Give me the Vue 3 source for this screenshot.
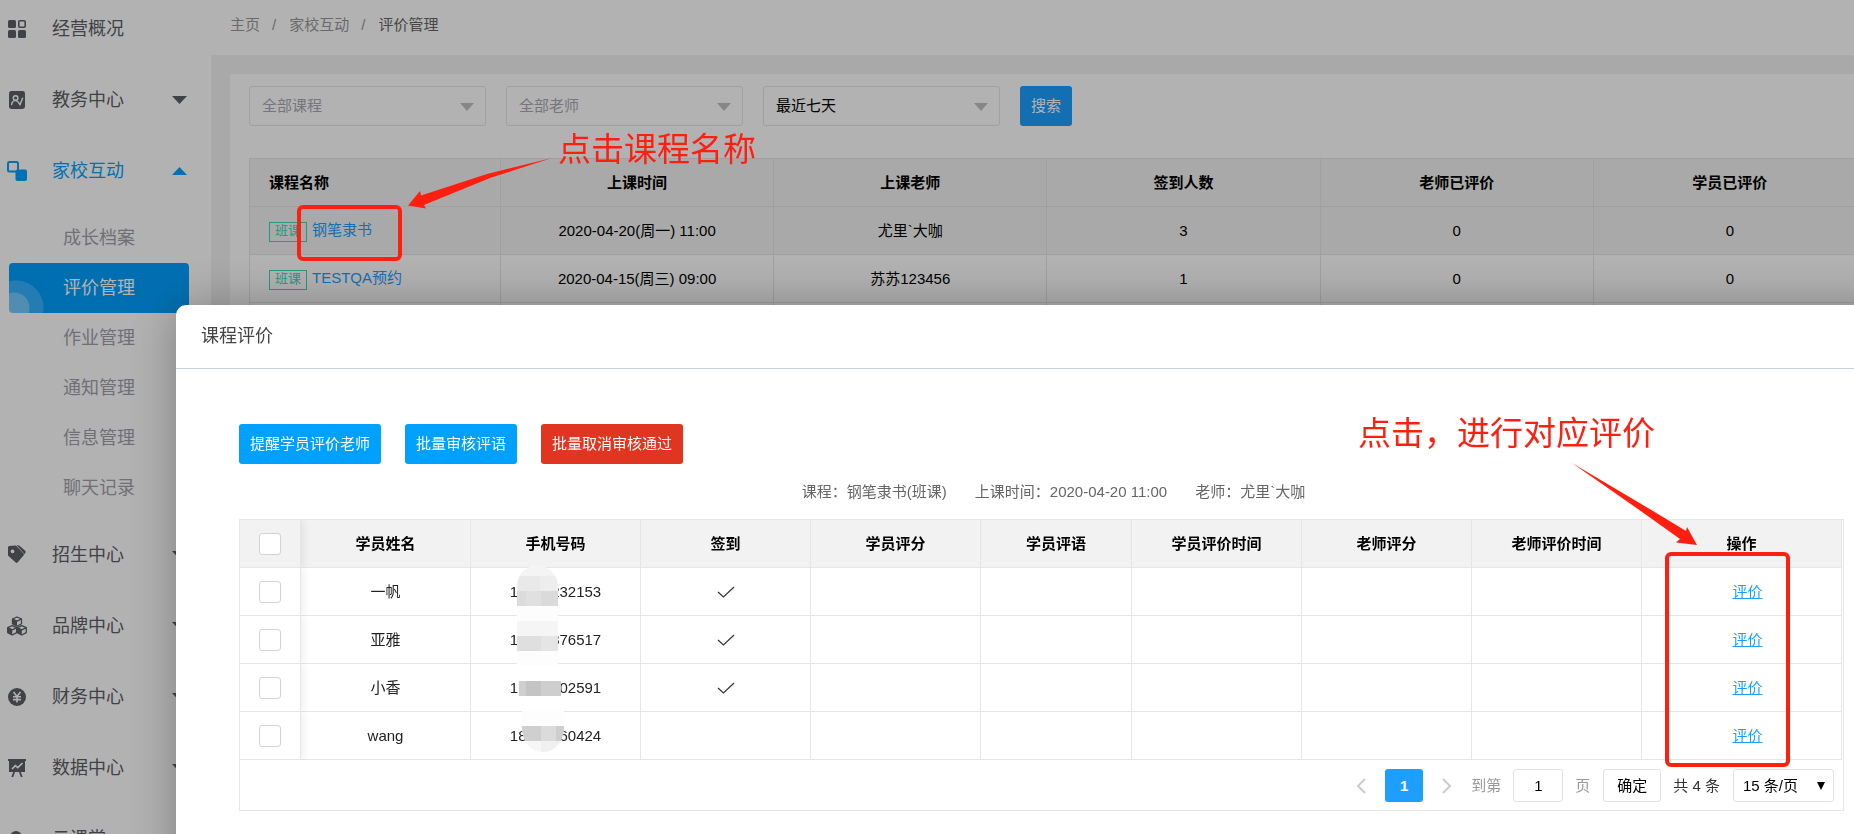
<script setup>
import { ref } from 'vue'

const topMenu = [
  { label: '经营概况', icon: 'grid', arrow: false },
  { label: '教务中心', icon: 'book', arrow: true },
]
const subMenu = ['成长档案', '评价管理', '作业管理', '通知管理', '信息管理', '聊天记录']
const activeSub = ref('评价管理')
const bottomMenu = [
  { label: '招生中心', icon: 'tag' },
  { label: '品牌中心', icon: 'cubes' },
  { label: '财务中心', icon: 'yen' },
  { label: '数据中心', icon: 'board' },
  { label: '云课堂', icon: 'cloud' },
]

const lessonHeads = ['课程名称', '上课时间', '上课老师', '签到人数', '老师已评价', '学员已评价']
const lessons = [
  { name: '钢笔隶书', time: '2020-04-20(周一) 11:00', teacher: '尤里`大咖', count: 3, a: 0, b: 0, hover: true },
  { name: 'TESTQA预约', time: '2020-04-15(周三) 09:00', teacher: '苏苏123456', count: 1, a: 0, b: 0, hover: false },
  { name: '', time: '', teacher: '', count: '', a: '', b: '', hover: false },
]

const studentHeads = ['学员姓名', '手机号码', '签到', '学员评分', '学员评语', '学员评价时间', '老师评分', '老师评价时间', '操作']
const students = [
  { name: '一帆', head: '1', tail: '232153', signed: true },
  { name: '亚雅', head: '1', tail: '376517', signed: true },
  { name: '小香', head: '18', tail: '02591', signed: true },
  { name: 'wang', head: '18', tail: '60424', signed: false },
]
const pageNo = ref('1')
</script>

<template>
  <div class="page">
    <aside class="sidebar">
      <nav>
        <a v-for="m in topMenu" :key="m.label" href="#" class="item">
          <svg v-if="m.icon === 'grid'" class="icon" viewBox="0 0 20 20">
            <rect x="1" y="1" width="8" height="8" rx="1.6" />
            <rect x="11.8" y="1.8" width="6.4" height="6.4" rx="1" fill="none" stroke="currentColor" stroke-width="1.6" />
            <rect x="1" y="11" width="8" height="8" rx="1.6" />
            <rect x="11" y="11" width="8" height="8" rx="1.6" />
          </svg>
          <svg v-else class="icon" viewBox="0 0 20 20">
            <rect x="2" y="1" width="16" height="18" rx="2.4" />
            <g fill="none" stroke="#fff" stroke-width="1.4" stroke-linecap="round">
              <circle cx="8.6" cy="8" r="2.3" />
              <path d="M4.6 14.6c.4-2.500 1.800-4 3.800-4.200 1.800.2 2.800 1.200 4.600 4.200l2.600-6.400" />
            </g>
          </svg>
          <span>{{ m.label }}</span>
          <svg v-if="m.arrow" class="caret" viewBox="0 0 15 8"><path d="M0 0h15L7.500 8z" /></svg>
        </a>
        <a href="#" class="item open">
          <svg class="icon" viewBox="0 0 20 20">
            <rect x="1" y="1" width="10" height="9.500" rx="1.500" fill="none" stroke="currentColor" stroke-width="2" />
            <rect x="8.500" y="8.500" width="11.500" height="11.500" rx="2" />
          </svg>
          <span>家校互动</span>
          <svg class="caret" viewBox="0 0 15 8"><path d="M0 8h15L7.500 0z" /></svg>
        </a>
        <div class="submenu">
          <a
            v-for="s in subMenu"
            :key="s"
            href="#"
            class="sub"
            :class="{ active: s === activeSub }"
            @click.prevent="activeSub = s"
          >{{ s }}</a>
        </div>
        <a v-for="m in bottomMenu" :key="m.label" href="#" class="item">
          <svg v-if="m.icon === 'tag'" class="icon" viewBox="0 0 20 20">
            <path fill-rule="evenodd" d="M1 2l1-1 7-.6 7.500 8.100c.6.7.6 1.300 0 1.900l-6 7.100c-.6.6-1.200.6-1.800 0L1 10.500zM5.500 4.400a1.900 1.900 0 1 0 0 3.800 1.900 1.900 0 0 0 0-3.800z" />
            <path d="M9.500 0l3 .8 5.700 4.900c.6.5.7 1.200.3 1.900l-.9 1.700z" />
          </svg>
          <svg v-else-if="m.icon === 'cubes'" class="icon" viewBox="0 0 20 20">
            <g fill="none" stroke="currentColor" stroke-width="1.300" stroke-linejoin="round">
              <path d="M10 1l4.500 2v4.800L10 10.200 5.500 7.800V3z" />
              <path d="M5.200 9.700l4.500 2v4.900L5.200 19 .7 16.600v-4.900z" />
              <path d="M14.800 9.700l4.500 2v4.900L14.800 19l-4.500-2.400v-4.900z" />
              <path d="M5.500 3l4.500 2.200L14.500 3M.7 11.700l4.500 2.200 4.500-2.200M10.300 11.700l4.500 2.200 4.500-2.200" />
            </g>
            <path d="M5.500 3l4.500 2.200v5L5.500 7.800zM.7 11.700l4.500 2.200V19L.7 16.600zM10.300 11.700l4.500 2.200V19l-4.500-2.400z" />
          </svg>
          <svg v-else-if="m.icon === 'yen'" class="icon" viewBox="0 0 20 20">
            <circle cx="10" cy="10" r="9" />
            <path d="M6.500 5l3.500 4.500L13.500 5M6 9.800h8M6 12.600h8M10 9.500V15.500" fill="none" stroke="#fff" stroke-width="1.600" />
          </svg>
          <svg v-else-if="m.icon === 'board'" class="icon" viewBox="0 0 20 20">
            <path d="M1 1h18v2H1zM2 3h16v11H2z" />
            <path d="M7.200 14l-2 5M12.800 14l2 5" stroke="currentColor" stroke-width="1.800" />
            <path d="M5 11l3.400-3.400 2.400 2L15.500 5" fill="none" stroke="#fff" stroke-width="1.600" />
          </svg>
          <svg v-else class="icon" viewBox="0 0 20 20">
            <circle cx="9" cy="8" r="6" />
            <rect x="2" y="9" width="16" height="9" rx="4" />
          </svg>
          <span>{{ m.label }}</span>
          <svg class="caret" viewBox="0 0 15 8"><path d="M0 0h15L7.500 8z" /></svg>
        </a>
      </nav>
    </aside>

    <main class="main">
      <header class="crumbs">
        <a href="#">主页</a><i>/</i><a href="#">家校互动</a><i>/</i><span>评价管理</span>
      </header>
      <section class="panel">
        <form class="filters" @submit.prevent>
          <div class="pick">
            <select aria-label="课程" class="muted"><option>全部课程</option></select>
            <svg viewBox="0 0 14 8"><path d="M0 0h14L7 8z" /></svg>
          </div>
          <div class="pick">
            <select aria-label="老师" class="muted"><option>全部老师</option></select>
            <svg viewBox="0 0 14 8"><path d="M0 0h14L7 8z" /></svg>
          </div>
          <div class="pick">
            <select aria-label="时间"><option>最近七天</option></select>
            <svg viewBox="0 0 14 8"><path d="M0 0h14L7 8z" /></svg>
          </div>
          <button class="btn search">搜索</button>
        </form>
        <table class="lessons">
          <thead>
            <tr><th v-for="h in lessonHeads" :key="h">{{ h }}</th></tr>
          </thead>
          <tbody>
            <tr v-for="l in lessons" :key="l.name" :class="{ hover: l.hover }">
              <td>
                <template v-if="l.name">
                  <span class="badge">班课</span><a href="#">{{ l.name }}</a>
                </template>
              </td>
              <td>{{ l.time }}</td>
              <td>{{ l.teacher }}</td>
              <td>{{ l.count }}</td>
              <td>{{ l.a }}</td>
              <td>{{ l.b }}</td>
            </tr>
          </tbody>
        </table>
      </section>
    </main>
  </div>

  <div class="shade"></div>

  <section class="dialog" role="dialog" aria-labelledby="dialog-title">
    <h2 id="dialog-title">课程评价</h2>
    <div class="body">
      <div class="actions">
        <button class="btn">提醒学员评价老师</button>
        <button class="btn">批量审核评语</button>
        <button class="btn danger">批量取消审核通过</button>
      </div>
      <p class="info">
        <span>课程：钢笔隶书(班课)</span>
        <span>上课时间：2020-04-20 11:00</span>
        <span>老师：尤里`大咖</span>
      </p>
      <div class="grid">
        <table class="students">
          <thead>
            <tr>
              <th class="check"><input type="checkbox" aria-label="全选" /></th>
              <th v-for="(h, i) in studentHeads" :key="h" :class="{ narrow: i === 4, ops: i === 8 }">{{ h }}</th>
            </tr>
          </thead>
          <tbody>
            <tr v-for="s in students" :key="s.name">
              <td class="check"><input type="checkbox" :aria-label="s.name" /></td>
              <td>{{ s.name }}</td>
              <td class="phone">{{ s.head }}<span class="hidden"></span>{{ s.tail }}</td>
              <td>
                <svg v-if="s.signed" class="tick" viewBox="0 0 18 12"><path d="M1 6l5.500 5L17 1" /></svg>
              </td>
              <td></td><td></td><td></td><td></td><td></td>
              <td class="ops"><a href="#">评价</a></td>
            </tr>
          </tbody>
        </table>
        <div class="pager">
          <button class="step" aria-label="上一页"><svg viewBox="0 0 10 16"><path d="M9 1L2 8l7 7" /></svg></button>
          <button class="current">1</button>
          <button class="step" aria-label="下一页"><svg viewBox="0 0 10 16"><path d="M1 1l7 7-7 7" /></svg></button>
          <label for="page-no" class="grey to">到第</label>
          <input id="page-no" v-model="pageNo" type="text" />
          <span class="grey">页</span>
          <button class="ok">确定</button>
          <span class="total">共 4 条</span>
          <div class="size">
            <select aria-label="每页条数"><option>15 条/页</option></select>
            <svg viewBox="0 0 8 8"><path d="M0 0h8L4 8z" /></svg>
          </div>
        </div>
      </div>
    </div>
  </section>

  <!-- pixelated strip over the phone numbers -->
  <svg class="mosaic" width="50" height="188" viewBox="0 0 50 188" aria-hidden="true">
    <clipPath id="strip">
      <path d="M1 20C2 6 11 0 21 0s20 6 21 20v90h3v30h3v22c-1 16-10 24-21 24S7 178 6 162V130H3V105H1z" />
    </clipPath>
    <g clip-path="url(#strip)" shape-rendering="crispEdges">
      <rect width="50" height="188" fill="#fff" />
      <rect width="50" height="10" fill="#f4f4f4" />
      <rect y="10" width="24" height="15" fill="#e9e9e9" /><rect x="24" y="10" width="26" height="15" fill="#ededed" />
      <rect y="25" width="10" height="15" fill="#dcdcdc" /><rect x="10" y="25" width="15" height="15" fill="#e0e0e0" /><rect x="25" y="25" width="25" height="15" fill="#dadada" />
      <rect y="40" width="50" height="15" fill="#fdfdfd" />
      <rect y="55" width="50" height="15" fill="#f5f5f5" />
      <rect y="70" width="25" height="15" fill="#dfdfdf" /><rect x="25" y="70" width="25" height="15" fill="#e5e5e5" />
      <rect y="85" width="50" height="15" fill="#fdfdfd" />
      <rect y="115" width="10" height="15" fill="#cfcfcf" /><rect x="10" y="115" width="15" height="15" fill="#c4c4c4" /><rect x="25" y="115" width="25" height="15" fill="#cecece" />
      <rect y="145" width="50" height="15" fill="#fdfdfd" />
      <rect y="160" width="25" height="15" fill="#cfcfcf" /><rect x="25" y="160" width="15" height="15" fill="#dbdbdb" /><rect x="40" y="160" width="10" height="15" fill="#cdcdcd" />
      <rect y="175" width="25" height="13" fill="#f6f6f6" /><rect x="25" y="175" width="25" height="13" fill="#f0f0f0" />
    </g>
  </svg>

  <svg class="marks" aria-hidden="true">
    <rect x="299" y="207" width="101" height="52" rx="4" />
    <path d="M552 158L487 174 421 195.500 420 191 408 205.500 426 208.500 424 205 490 178z" />
    <rect x="1667" y="554" width="121" height="211" rx="4" />
    <path d="M1572 463L1653 511 1686 531 1687 527 1697 545 1676 542.500 1680 539 1640 510.500z" />
  </svg>
  <div class="note first">点击课程名称</div>
  <div class="note second">点击，进行对应评价</div>
</template>

<style>
body {
  overflow: hidden;
}
</style>

<style scoped>
.page,
.dialog,
.note {
  font-family: "Liberation Sans", "Noto Sans CJK SC", sans-serif;
  font-size: 15px;
  line-height: 20px;
}
button,
input,
select {
  font: inherit;
}
a {
  text-decoration: none;
}
.page {
  display: flex;
  height: 100vh;
  overflow: hidden;
  background: #f2f2f2;
}
.sidebar {
  flex: none;
  box-sizing: border-box;
  width: 211px;
  padding: 11px 22px 0 9px;
  background: #fff;
}
.item {
  display: flex;
  align-items: center;
  height: 35px;
  margin: 0 2px 36px -2px;
  color: #5c5f66;
  font-size: 18px;
}
.icon {
  width: 20px;
  height: 20px;
  margin-right: 25px;
  fill: currentColor;
}
.caret {
  width: 15px;
  height: 8px;
  margin-left: auto;
  fill: currentColor;
}
.item.open {
  margin-bottom: 25px;
  color: #00a3ff;
}
.submenu {
  margin-bottom: 24px;
}
.sub {
  display: block;
  padding-left: 54px;
  color: #9fa1aa;
  font-size: 18px;
  line-height: 50px;
}
.sub.active {
  border-radius: 4px;
  background:
    radial-gradient(circle at 5px 45px, rgba(255, 255, 255, 0.3) 15px, transparent 16px),
    radial-gradient(circle at 7px 45px, rgba(255, 255, 255, 0.2) 27px, transparent 28px),
    #00a0ff;
  color: #fff;
}
.main {
  flex: 1;
  min-width: 0;
  overflow: hidden;
}
.crumbs {
  box-sizing: border-box;
  height: 55px;
  padding: 15px 19px;
  background: #fff;
  color: #666;
}
.crumbs a,
.crumbs i {
  color: #999;
}
.crumbs i {
  margin: 0 13px 0 12px;
  font-style: normal;
}
.panel {
  margin: 19px -32px 0 19px;
  padding: 12px 19px 0;
  border-radius: 3px;
  background: #fff;
}
.filters {
  display: flex;
  gap: 20px;
  margin-bottom: 32px;
}
.pick {
  position: relative;
  width: 237px;
}
.pick select {
  box-sizing: border-box;
  width: 100%;
  height: 40px;
  padding: 0 12px;
  border: 1px solid #e6e6e6;
  border-radius: 3px;
  background: #fff;
  color: #000;
  appearance: none;
}
.pick select.muted {
  color: #a8aab2;
}
.pick svg {
  position: absolute;
  top: 17px;
  right: 12px;
  width: 14px;
  height: 8px;
  fill: #c2c2c2;
  pointer-events: none;
}
.btn {
  height: 40px;
  padding: 0 11px;
  border: 0;
  border-radius: 3px;
  background: #00a0ff;
  color: #fff;
}
.btn.search {
  background: #1e9fff;
}
.btn.danger {
  background: #e03520;
}
table {
  border-spacing: 0;
  table-layout: fixed;
}
th,
td {
  box-sizing: border-box;
  height: 48px;
  padding: 0;
  border: solid #e6e6e6;
  border-width: 0 1px 1px 0;
  text-align: center;
}
th {
  background: #f2f2f2;
}
.lessons {
  width: 100%;
  border: solid #e6e6e6;
  border-width: 1px 0 0 1px;
}
.lessons th:first-child,
.lessons td:first-child {
  width: 251px;
  padding-left: 19px;
  text-align: left;
}
.lessons .hover td {
  background: #f2f2f2;
}
.lessons a {
  color: #1e9fff;
}
.badge {
  display: inline-block;
  margin-right: 5px;
  padding: 1px 5px 3px;
  border: 1px solid #3dd9bb;
  color: #3dd9bb;
  font-size: 13px;
  line-height: 14px;
}
.shade {
  position: fixed;
  inset: 0;
  background: rgba(0, 0, 0, 0.3);
}
.dialog {
  position: fixed;
  inset: 305px -53px -60px 176px;
  border-radius: 10px;
  background: #fff;
  box-shadow: 1px 1px 50px rgba(0, 0, 0, 0.3);
}
.dialog h2 {
  box-sizing: border-box;
  height: 64px;
  margin: 0;
  padding-left: 25px;
  border-bottom: 1px solid #c9d3df;
  color: #444;
  font-size: 18px;
  font-weight: 400;
  line-height: 62px;
}
.body {
  padding: 55px 63px 0;
}
.actions {
  display: flex;
  gap: 24px;
}
.info {
  display: flex;
  justify-content: center;
  gap: 28px;
  margin: 18px 0 17px;
  padding-left: 24px;
  color: #666;
}
.grid {
  border: 1px solid #e6e6e6;
}
.students {
  width: calc(100% - 1px);
}
.students th.check,
.students td.check {
  position: relative;
  width: 61px;
  box-shadow: 2px 0 8px rgba(0, 0, 0, 0.08);
  clip-path: inset(0 -12px 0 0);
}
.check input {
  display: block;
  box-sizing: border-box;
  width: 22px;
  height: 22px;
  margin: 0 auto;
  border: 1px solid #d2d2d2;
  border-radius: 3px;
  background: #fff;
  appearance: none;
}
.students .narrow {
  width: 151px;
}
.students .ops {
  width: 200px;
}
.students td {
  color: #222;
}
.students td.ops {
  padding-left: 12px;
}
.students td a {
  color: #1e9fff;
  text-decoration: underline;
}
.hidden {
  display: inline-block;
  width: 33px;
}
.tick {
  display: block;
  width: 18px;
  height: 12px;
  margin: 0 auto;
  fill: none;
  stroke: #333;
  stroke-width: 1.2;
}
.pager {
  display: flex;
  align-items: center;
  justify-content: flex-end;
  height: 49px;
  padding: 1px 9px 0 0;
}
.pager button,
.pager > input,
.pager select {
  box-sizing: border-box;
  height: 33px;
  padding: 0;
  border: 1px solid #e2e2e2;
  border-radius: 3px;
  background: #fff;
  color: #000;
}
.pager .step {
  width: 48px;
  border: 0;
}
.step svg {
  display: block;
  width: 10px;
  height: 16px;
  margin: 0 auto;
  fill: none;
  stroke: #ccc;
  stroke-width: 2;
}
.pager .current {
  width: 38px;
  border: 0;
  background: #1e9fff;
  color: #fff;
  font-weight: 700;
}
.grey {
  color: #999;
}
.pager > input {
  width: 50px;
  margin: 0 12px;
  text-align: center;
}
.pager .ok {
  width: 58px;
  margin: 0 12px 0 13px;
}
.total {
  margin-right: 13px;
  color: #333;
}
.size {
  position: relative;
  width: 101px;
}
.size select {
  width: 100%;
  padding: 0 9px;
  appearance: none;
}
.size svg {
  position: absolute;
  top: 13px;
  right: 9px;
  width: 8px;
  height: 8px;
  pointer-events: none;
}
.mosaic {
  position: fixed;
  top: 566px;
  left: 516px;
}
.marks {
  position: fixed;
  top: 0;
  left: 0;
  width: 100%;
  height: 100%;
  pointer-events: none;
}
.marks rect {
  fill: none;
  stroke: #ff1f11;
  stroke-width: 4;
}
.marks path {
  fill: #ff1f11;
}
.note {
  position: fixed;
  color: #ff1f11;
  font-size: 33px;
  line-height: 40px;
  white-space: nowrap;
}
.note.first {
  top: 130px;
  left: 558px;
}
.note.second {
  top: 414px;
  left: 1358px;
}
</style>
